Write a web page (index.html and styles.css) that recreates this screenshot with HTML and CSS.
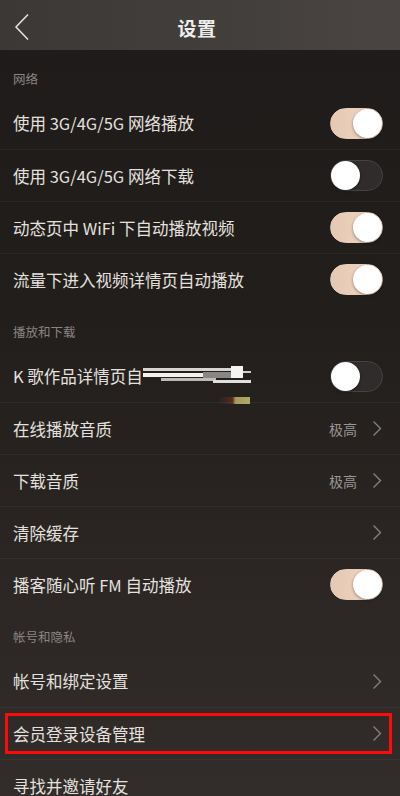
FILE: index.html
```html
<!DOCTYPE html>
<html lang="zh">
<head>
<meta charset="utf-8">
<link rel="stylesheet" href="styles.css">
</head>
<body>
<div class="app">
  <header class="topbar">
    <svg class="back" width="16" height="28" viewBox="0 0 16 28"><path d="M14 1.5 L2 14 L14 26.5" fill="none" stroke="#e8e6e4" stroke-width="1.5"/></svg>
    <div class="title">设置</div>
  </header>

  <div class="sec first">网络</div>
  <div class="row"><span class="label">使用 3G/4G/5G 网络播放</span><span class="toggle on"><i></i></span></div>
  <div class="row"><span class="label">使用 3G/4G/5G 网络下载</span><span class="toggle"><i></i></span></div>
  <div class="row"><span class="label">动态页中 WiFi 下自动播放视频</span><span class="toggle on"><i></i></span></div>
  <div class="row"><span class="label">流量下进入视频详情页自动播放</span><span class="toggle on"><i></i></span></div>

  <div class="sec">播放和下载</div>
  <div class="row redrow">
    <span class="label">K 歌作品详情页自</span>
    <span class="redact">
      <b class="r1"></b><b class="r2"></b><b class="r3"></b><b class="r4"></b><b class="r5"></b><b class="r6"></b><b class="r7"></b>
    </span>
    <span class="spot"></span>
    <span class="toggle"><i></i></span>
  </div>
  <div class="row"><span class="label">在线播放音质</span><span class="value">极高</span><svg class="chev" width="10" height="17" viewBox="0 0 10 17"><path d="M1.5 1.5 L8.5 8.5 L1.5 15.5" fill="none" stroke="#858180" stroke-width="1.4"/></svg></div>
  <div class="row"><span class="label">下载音质</span><span class="value">极高</span><svg class="chev" width="10" height="17" viewBox="0 0 10 17"><path d="M1.5 1.5 L8.5 8.5 L1.5 15.5" fill="none" stroke="#858180" stroke-width="1.4"/></svg></div>
  <div class="row"><span class="label">清除缓存</span><svg class="chev" width="10" height="17" viewBox="0 0 10 17"><path d="M1.5 1.5 L8.5 8.5 L1.5 15.5" fill="none" stroke="#858180" stroke-width="1.4"/></svg></div>
  <div class="row"><span class="label">播客随心听 FM 自动播放</span><span class="toggle on"><i></i></span></div>

  <div class="sec">帐号和隐私</div>
  <div class="row"><span class="label">帐号和绑定设置</span><svg class="chev" width="10" height="17" viewBox="0 0 10 17"><path d="M1.5 1.5 L8.5 8.5 L1.5 15.5" fill="none" stroke="#858180" stroke-width="1.4"/></svg></div>
  <div class="row mark"><span class="label">会员登录设备管理</span><svg class="chev" width="10" height="17" viewBox="0 0 10 17"><path d="M1.5 1.5 L8.5 8.5 L1.5 15.5" fill="none" stroke="#858180" stroke-width="1.4"/></svg><span class="box"></span></div>
  <div class="row"><span class="label">寻找并邀请好友</span></div>
</div>
</body>
</html>
```
FILE: styles.css
```css
* { box-sizing: border-box; }
html, body { margin: 0; padding: 0; }
body {
  width: 400px;
  height: 796px;
  overflow: hidden;
  background: #221e1d;
  font-family: "Noto Sans CJK SC", "Noto Sans", sans-serif;
}
.app {
  width: 400px;
  height: 796px;
  overflow: hidden;
  background: linear-gradient(180deg, #1f1b1a 0%, #221e1c 40%, #2c2725 75%, #322c2a 100%);
}
.topbar {
  height: 50px;
  position: relative;
  display: flex;
  align-items: center;
  justify-content: center;
  background: linear-gradient(90deg, #3b3836 0%, #433f3c 60%, #4a4542 100%);
}
.back {
  position: absolute;
  left: 14px;
  top: 13px;
}
.title {
  color: #f0eeec;
  font-size: 19px;
  font-weight: 700;
  letter-spacing: 0.5px;
  margin-top: 4px;
  margin-left: -6px;
}
.sec {
  height: 45px;
  padding: 19px 0 0 13px;
  font-size: 12.5px;
  line-height: 16px;
  color: #8a8583;
}
.sec.first { height: 47px; padding-top: 21px; }
.row {
  height: 52px;
  display: flex;
  align-items: center;
  padding: 0 17px 0 13px;
  border-top: 1px solid rgba(255,255,255,0.045);
  position: relative;
}
.sec + .row { border-top: none; }
.label {
  color: #e4e1df;
  font-size: 16.5px;
  flex: 1;
  white-space: nowrap;
}
.redrow .label { flex: none; }
.value {
  color: #9b9794;
  font-size: 14px;
  margin-right: 15px;
}
.chev { margin-right: 1px; }
.toggle {
  width: 53px;
  height: 31px;
  border-radius: 16px;
  background: #2f2c2b;
  border: 1px solid #464241;
  position: relative;
  flex: none;
}
.toggle i {
  position: absolute;
  width: 29px;
  height: 29px;
  border-radius: 50%;
  background: #ffffff;
  top: 0;
  left: 0;
  box-shadow: 0 1px 3px rgba(0,0,0,0.4);
}
.toggle.on {
  background: linear-gradient(90deg, #e6c8b2, #eed8c8);
  border-color: #e8cdb9;
}
.toggle.on i { left: auto; right: 0; }
.redact {
  flex: 1;
  position: relative;
  height: 18px;
  margin-top: -2px;
}
.redact b { position: absolute; display: block; }
.redact .r1 { left: 0; top: 2px; width: 95px; height: 3px; background: #d8d6d4; }
.redact .r2 { left: 0; top: 7px; width: 60px; height: 4px; background: #f2f2f2; }
.redact .r3 { left: 18px; top: 12px; width: 55px; height: 3px; background: #bdbab8; }
.redact .r4 { left: 60px; top: 6px; width: 34px; height: 6px; background: #8a8684; }
.redact .r5 { left: 88px; top: 0; width: 12px; height: 12px; background: #f4f4f4; }
.redact .r6 { left: 70px; top: 14px; width: 38px; height: 3px; background: #e2e0de; }
.redact .r7 { left: 100px; top: 5px; width: 8px; height: 2px; background: #d0cecc; }
.spot {
  position: absolute;
  left: 218px;
  top: 47px;
  width: 32px;
  height: 7px;
  background: linear-gradient(90deg, rgba(80,30,20,0), rgba(110,50,30,0.6) 45%, #a29a5a 55%, #b0a866);
}
.box {
  position: absolute;
  left: 5px;
  right: 8px;
  top: 5px;
  bottom: 5px;
  border: 3px solid #ff0a0a;
}
```
